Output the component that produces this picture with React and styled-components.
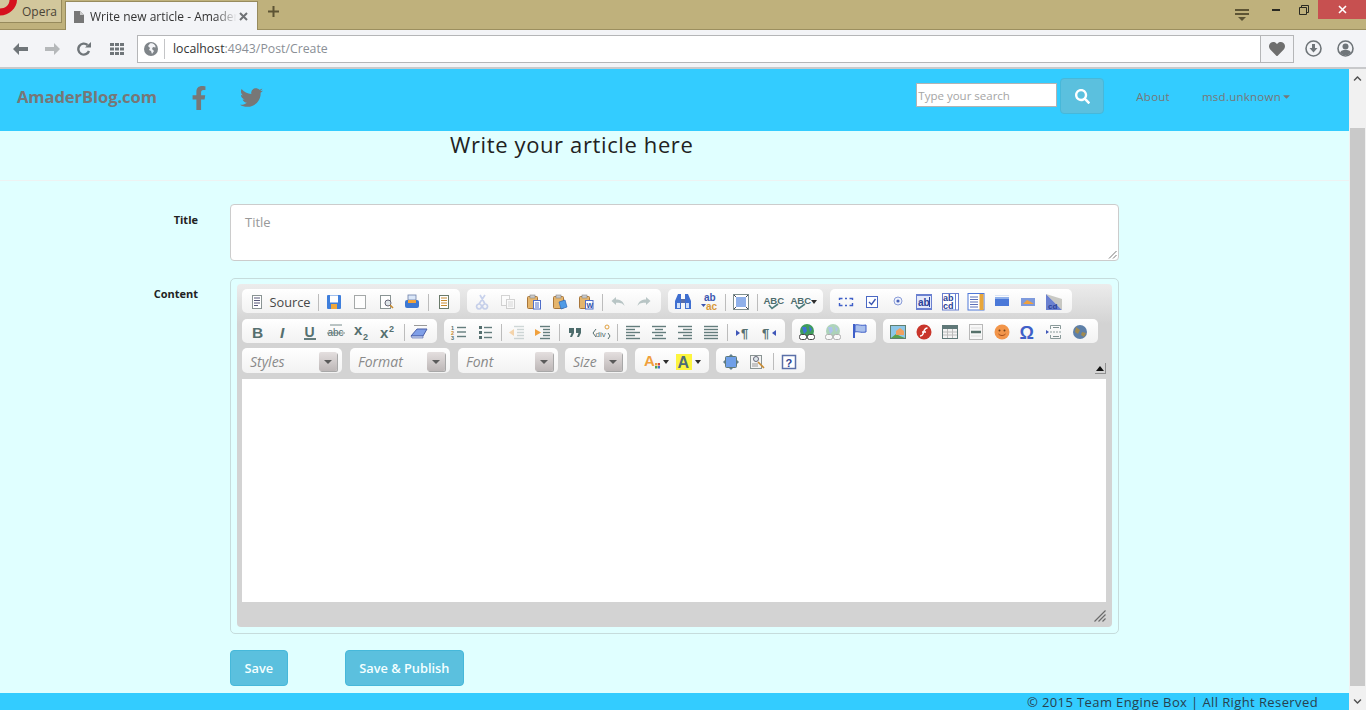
import React from 'react';
import styled, { createGlobalStyle } from 'styled-components';
import { FaFacebookF, FaTwitter, FaSearch, FaHeart, FaCaretDown, FaChevronUp, FaChevronDown } from 'react-icons/fa';

const GlobalStyle = createGlobalStyle`
  html, body { margin: 0; padding: 0; height: 100%; overflow: hidden; }
  body { font-family: "Open Sans", "Noto Sans", sans-serif; background: #e0ffff; color: #333; }
  * { box-sizing: border-box; }
`;

/* ---------- browser chrome ---------- */
const Shell = styled.div`
  display: flex;
  flex-direction: column;
  width: 1366px;
  height: 710px;
  overflow: hidden;
`;

const TabStrip = styled.div`
  display: flex;
  align-items: flex-start;
  height: 30px;
  flex: none;
  background: #bfb17c;
  border-bottom: 1px solid #9c8f5f;
`;

const OperaButton = styled.div`
  position: relative;
  display: flex;
  align-items: center;
  width: 62px;
  height: 23px;
  padding-left: 22px;
  background: #d2c79c;
  border: 1px solid #968a5c;
  border-top: none;
  border-left: none;
  font-size: 12px;
  color: #4a4436;
  overflow: hidden;
`;

const OperaLogo = styled.svg`
  position: absolute;
  left: 0;
  top: 0;
`;

const Tab = styled.div`
  display: flex;
  align-items: center;
  width: 193px;
  height: 30px;
  margin: 1px 0 0 3px;
  padding: 0 9px 0 8px;
  background: #f3f4f7;
  border: 1px solid #978b5d;
  border-bottom: none;
  font-size: 12px;
  color: #333;
`;

const TabTitle = styled.span`
  width: 147px;
  margin: 0 2px 0 6px;
  white-space: nowrap;
  overflow: hidden;
  mask-image: linear-gradient(to right, #000 85%, transparent 100%);
`;

const NewTab = styled.div`
  margin: 6px 0 0 10px;
  line-height: 0;
`;

const WindowControls = styled.div`
  display: flex;
  align-items: flex-start;
  margin-left: auto;
`;

const TabMenu = styled.div`
  margin: 9px 13px 0 0;
  line-height: 0;
`;

const WinButton = styled.div`
  display: flex;
  align-items: center;
  justify-content: center;
  width: ${(p) => p.$w || 28}px;
  height: 19px;
  background: ${(p) => p.$bg || 'transparent'};
  line-height: 0;
`;

const Toolbar = styled.div`
  display: flex;
  align-items: center;
  height: 39px;
  flex: none;
  padding: 0 0 0 13px;
  background: #f3f4f7;
  border-bottom: 2px solid #c8c9cb;
`;

const NavGlyph = styled.div`
  width: ${(p) => p.$w || 32}px;
  line-height: 0;
`;

const AddressBar = styled.div`
  display: flex;
  align-items: center;
  width: 1157px;
  height: 28px;
  background: #fff;
  border: 1px solid #b5b6b8;
`;

const SiteIcon = styled.div`
  display: flex;
  align-items: center;
  height: 20px;
  padding: 0 6px;
  border-right: 1px solid #c4c5c7;
  line-height: 0;
`;

const Url = styled.div`
  margin-left: 8px;
  font-size: 12.3px;
  color: #333;
  span { color: #8a8f96; }
`;

const HeartBox = styled.div`
  display: flex;
  align-items: center;
  justify-content: center;
  width: 33px;
  height: 100%;
  margin-left: auto;
  background: #f3f4f7;
  border-left: 1px solid #b5b6b8;
  color: #6e6e6e;
`;

const RoundTools = styled.div`
  display: flex;
  gap: 15px;
  margin-left: 11px;
  line-height: 0;
`;

/* ---------- page ---------- */
const Viewport = styled.div`
  display: flex;
  flex: 1;
  min-height: 0;
`;

const Page = styled.div`
  display: flex;
  flex-direction: column;
  width: 1349px;
  background: #e0ffff;
`;

const Scrollbar = styled.div`
  display: flex;
  flex-direction: column;
  align-items: center;
  width: 17px;
  background: #f1f1f1;
  color: #505050;
`;

const ScrollArrow = styled.div`
  display: flex;
  align-items: center;
  justify-content: center;
  width: 100%;
  height: ${(p) => p.$h}px;
  margin-top: ${(p) => p.$mt || 0}px;
  font-size: 9px;
`;

const ScrollThumb = styled.div`
  width: 15px;
  height: 558px;
  margin-top: 41px;
  background: #c9c9c9;
`;

const NavBar = styled.header`
  display: flex;
  align-items: center;
  height: 62px;
  flex: none;
  padding: 0 0 8px 17px;
  background: #33ccff;
`;

const Brand = styled.div`
  width: 170px;
  font-size: 16.6px;
  font-weight: 700;
  color: #777;
  letter-spacing: -0.1px;
`;

const SocialLink = styled.div`
  display: flex;
  width: ${(p) => p.$w}px;
  padding-top: 3px;
  font-size: ${(p) => p.$size}px;
  color: #777;
`;

const SearchForm = styled.div`
  display: flex;
  align-items: center;
  margin-left: auto;
`;

const SearchInput = styled.div`
  display: flex;
  align-items: center;
  width: 141px;
  height: 24px;
  margin-bottom: 2px;
  padding-left: 1px;
  background: #fff;
  border: 1px solid #b3b3b3;
  font-size: 11.5px;
  color: #a5a5a5;
`;

const SearchButton = styled.div`
  display: flex;
  align-items: center;
  justify-content: center;
  width: 44px;
  height: 36px;
  margin-left: 3px;
  background: #5bc0de;
  border: 1px solid #46b8da;
  border-radius: 4px;
  color: #fff;
  font-size: 15px;
`;

const NavLink = styled.div`
  display: flex;
  align-items: center;
  margin-left: ${(p) => p.$ml}px;
  margin-right: ${(p) => p.$mr || 0}px;
  font-size: 11.5px;
  color: #777;
  letter-spacing: 0.25px;
`;

const Heading = styled.h2`
  height: 50px;
  flex: none;
  margin: 0;
  padding-left: 450px;
  border-bottom: 1px solid #eef2f2;
  font-size: 22px;
  font-weight: 400;
  letter-spacing: 0.62px;
  line-height: 27px;
  color: #222;
`;

const FormRow = styled.div`
  display: grid;
  grid-template-columns: 198px 889px;
  column-gap: 32px;
  margin-top: ${(p) => p.$mt}px;
`;

const Label = styled.label`
  padding-top: ${(p) => p.$pt}px;
  font-size: 11px;
  font-weight: 700;
  line-height: 16px;
  text-align: right;
  color: #222;
`;

const TitleInput = styled.div`
  position: relative;
  height: 57px;
  padding: 8px 14px;
  background: #fff;
  border: 1px solid #ccc;
  border-radius: 4px;
  font-size: 13px;
  line-height: 18px;
  color: #999;
`;

const Grip = styled.svg`
  position: absolute;
  right: 1px;
  bottom: 1px;
`;

const EditorFrame = styled.div`
  height: 356px;
  padding: 5px 6px;
  border: 1px solid #c6dcdc;
  border-radius: 5px;
`;

const Editor = styled.div`
  position: relative;
  display: flex;
  flex-direction: column;
  width: 875px;
  height: 343px;
  border-radius: 4px;
  background: linear-gradient(to bottom, #ececec 0, #d3d3d3 40px, #d3d3d3 100%);
`;

const ToolArea = styled.div`
  position: relative;
  display: flex;
  flex-direction: column;
  height: 95px;
  padding: 5px 0 0 5px;
`;

const ToolRow = styled.div`
  display: flex;
  gap: ${(p) => p.$gap ?? 7}px;
  height: ${(p) => p.$h}px;
  margin-bottom: ${(p) => p.$mb}px;
`;

const Group = styled.div`
  display: flex;
  align-items: center;
  width: ${(p) => p.$w}px;
  padding: 2px 0 0 ${(p) => p.$pl ?? 3}px;
  margin-right: ${(p) => p.$mr || 0}px;
  background: linear-gradient(to bottom, #fff, #f2f2f2);
  border-radius: 5px;
`;

const ToolButton = styled.div`
  display: flex;
  align-items: center;
  justify-content: center;
  flex: none;
  width: ${(p) => p.$w || 26}px;
  height: 100%;
  line-height: 0;
  opacity: ${(p) => (p.$off ? 0.4 : 1)};
`;

const SourceLabel = styled.span`
  margin-left: 4px;
  font-size: 12.8px;
  line-height: 16px;
  color: #474747;
`;

const Separator = styled.div`
  flex: none;
  width: 1px;
  height: 17px;
  margin: 0 2px 0 3px;
  background: #bcbcbc;
`;

const Caret = styled.span`
  width: 0;
  height: 0;
  margin-left: 3px;
  border: 3px solid transparent;
  border-top: 4px solid #2d2d2d;
  border-bottom: none;
`;

const Combo = styled.div`
  display: flex;
  align-items: center;
  justify-content: space-between;
  width: ${(p) => p.$w}px;
  margin-right: ${(p) => p.$mr}px;
  padding: 2px 5px 0 8px;
  background: linear-gradient(to bottom, #fff, #f2f2f2);
  border-radius: 5px;
  font-size: 14px;
  font-style: italic;
  color: #8a8a8a;
`;

const ComboArrow = styled.div`
  display: flex;
  align-items: center;
  justify-content: center;
  width: 18px;
  height: 19px;
  background: linear-gradient(to bottom, #e4dfdf, #bdb7b7);
  border-radius: 2px;
  box-shadow: 1px 1px 0 #a8a8a8;

  &::after {
    content: '';
    border: 4px solid transparent;
    border-top: 4px solid #5a5a5a;
    border-bottom: none;
  }
`;

const Collapser = styled.div`
  position: absolute;
  right: 6px;
  bottom: 5px;
  display: flex;
  align-items: center;
  justify-content: center;
  width: 11px;
  height: 11px;
  border-right: 1px solid #8f8f8f;
  border-bottom: 1px solid #8f8f8f;

  &::after {
    content: '';
    border: 4px solid transparent;
    border-bottom: 5px solid #111;
    border-top: none;
  }
`;

const EditArea = styled.div`
  width: 864px;
  height: 223px;
  margin-left: 5px;
  background: #fff;
`;

const Resize = styled.svg`
  position: absolute;
  right: 6px;
  bottom: 5px;
`;

const Actions = styled.div`
  display: flex;
  gap: 57px;
  margin: 16px 0 0 230px;
`;

const ActionButton = styled.button`
  height: 36px;
  padding: 0 13.5px;
  background: #5bc0de;
  border: 1px solid #46b8da;
  border-radius: 4px;
  font-family: inherit;
  font-size: 12.8px;
  font-weight: 600;
  color: #f4ffff;
`;

const Footer = styled.footer`
  display: flex;
  justify-content: flex-end;
  align-items: center;
  height: 17px;
  flex: none;
  margin-top: auto;
  padding: 0 31px 0 0;
  background: #33ccff;
  font-size: 13px;
  letter-spacing: 0.4px;
  color: #27414f;
`;

/* ---------- CKEditor icons, 16x16 ---------- */
const lines = (ys, x1, x2, color = '#647d7d', w = 1.4) =>
  ys.map((y, i) => <path key={i} d={`M${Array.isArray(x1) ? x1[i] : x1} ${y}H${Array.isArray(x2) ? x2[i] : x2}`} stroke={color} strokeWidth={w} />);

const Doc = ({ x = 3, y = 1, w = 10, h = 14, fill = '#fff', stroke = '#8a9494' }) => (
  <rect x={x + 0.5} y={y + 0.5} width={w - 1} height={h - 1} fill={fill} stroke={stroke} />
);

const Clip = () => (
  <>
    <rect x="1.5" y="2.5" width="10" height="12" rx="1" fill="#e5b56c" stroke="#a8763a" />
    <rect x="4" y="1" width="5" height="3" fill="#c9c9c9" stroke="#888" strokeWidth=".6" />
  </>
);

const T = ({ x, y, size, fill = '#556f6f', weight = 700, style, children }) => (
  <text x={x} y={y} fontSize={size} fontWeight={weight} fontStyle={style} fill={fill} fontFamily="Liberation Sans, sans-serif">
    {children}
  </text>
);

const icons = {
  source: <><Doc /><path d="M5 4h6M5 6.500h6M5 9h6M5 11.500h4" stroke="#557" strokeWidth="1" /></>,
  save: <><rect x="1" y="1" width="14" height="14" rx="1" fill="#3f7fdc" /><rect x="4" y="1.500" width="8" height="7" fill="#fff" /><rect x="5" y="10" width="6" height="5" fill="#f0a83c" /></>,
  newpage: <Doc x={2} w={12} fill="#fdfdfd" stroke="#a4a8a8" />,
  preview: <><Doc x={2} w={11} /><circle cx="10" cy="9" r="3" fill="#dfe6ea" stroke="#667" /><path d="M12 11l3 3" stroke="#c98b30" strokeWidth="1.600" /></>,
  print: <><rect x="4" y="1" width="8" height="5" fill="#dbe7f8" stroke="#6c7fa8" strokeWidth=".8" /><rect x="1" y="6" width="14" height="8" rx="2" fill="#3e78d2" /><rect x="4" y="6" width="8" height="3" fill="#f2a33a" /></>,
  templates: <><Doc stroke="#6a7a6a" /><path d="M5 4h6M5 6.500h6M5 9h6M5 11.500h6" stroke="#c78b30" strokeWidth="1" /></>,
  cut: <path d="M11 1L5 10M6 1l5 9M5 10a2.500 2.500 0 1 0 .1 0M11 10a2.500 2.500 0 1 0 .1 0" fill="none" stroke="#7f97d8" strokeWidth="1.700" />,
  copy: <><Doc x={1} y={1} w={9} h={11} stroke="#999" /><Doc x={6} y={5} w={9} h={10} stroke="#999" /><path d="M8 8h5M8 10h5M8 12h5" stroke="#aaa" /></>,
  paste: <><Clip /><rect x="7.500" y="6.500" width="7" height="8.500" fill="#fff" stroke="#4f6dc8" /><path d="M9 9h4M9 11h4M9 13h4" stroke="#4f6dc8" /></>,
  pastetext: <><Clip /><path d="M7 8l6-2 2 7-6 2z" fill="#4f9be6" stroke="#2c66b8" strokeWidth=".7" /></>,
  pasteword: <><Clip /><rect x="7.500" y="6.500" width="7.500" height="8.500" fill="#fff" stroke="#4f6dc8" /><T x={8.500} y={13.500} size={7} fill="#2c4fa8">W</T></>,
  undo: <path d="M1.500 7L6 3v2.500c4 0 7.500 1.500 8.500 6.500-2-3-4.500-3.200-8.500-3.200V11z" fill="#5a7a7a" />,
  redo: <path d="M14.500 7L10 3v2.500C6 5.500 2.500 7 1.500 12c2-3 4.500-3.200 8.500-3.200V11z" fill="#5a7a7a" />,
  find: <><path d="M3 0h3v15H0V7zM10 0h3l3 7v8h-6z" fill="#3f6fd0" /><rect x="6" y="5" width="4" height="4" fill="#5a6fa8" /><rect x="2" y="9" width="3" height="5" fill="#cfe0fa" /><rect x="11" y="9" width="3" height="5" fill="#cfe0fa" /></>,
  replace: <><T x={3} y={7} size={10} fill="#3a56b0">ab</T><T x={5} y={15.500} size={10} fill="#d99a3a">ac</T><path d="M0 10l2.500 3 2.500-3z" fill="#3a56b0" /></>,
  selectall: <><rect x="0.500" y="0.500" width="15" height="15" fill="#fff" stroke="#7f8f8f" /><rect x="3" y="3" width="10" height="10" fill="#8fb0ea" /><path d="M1 1l2 2M15 1l-2 2M1 15l2-2M15 15l-2-2" stroke="#445" /></>,
  spell: <><T x={-1.500} y={9.500} size={9.500} fill="#4d6c6c">ABC</T><path d="M4 11l3 3.500L13 10" fill="none" stroke="#4d7c7c" strokeWidth="1.600" /></>,
  form: <path d="M1.500 6V4.500h3M7 4.500h2M11.500 4.500h3V6M1.500 9v2.500h3M7 11.500h2M11.500 11.500h3V9" fill="none" stroke="#3f5fc8" strokeWidth="1.400" />,
  checkbox: <><rect x="2.500" y="2.500" width="11" height="11" fill="#fff" stroke="#4a68c4" /><path d="M5 8l2.500 2.500L11.500 5" fill="none" stroke="#3a56b0" strokeWidth="1.400" /></>,
  radio: <><circle cx="8" cy="7" r="4" fill="#eef2fb" stroke="#8a9cd8" /><circle cx="8" cy="7" r="1.600" fill="#4a62b8" /></>,
  textfield: <><rect x="0" y="0" width="16" height="16" fill="#6a80d0" /><rect x="1" y="2" width="14" height="12" fill="#e4e9fa" /><T x={2} y={12} size={10} fill="#2c4298">ab</T><path d="M13.500 3v10" stroke="#2c4298" /></>,
  textarea: <><rect x="0.500" y="-.5" width="16" height="16.500" fill="#fff" stroke="#6a80d0" /><T x={1} y={7} size={9} fill="#2c4298">ab</T><T x={1} y={15} size={9} fill="#2c4298">cd</T><path d="M13.500 0v16" stroke="#6a80d0" /></>,
  select: <><rect x="0" y="-.5" width="16" height="16.500" fill="#fff" stroke="#4f78d8" /><path d="M2 3h8M2 5.500h8M2 8h8M2 10.500h8M2 13h8" stroke="#5b70b8" /><rect x="11.500" y="0" width="4" height="16" fill="#e8a63a" /></>,
  button: <><rect x="1" y="3" width="14" height="9" fill="#4a78d8" /><rect x="1" y="1" width="14" height="1" fill="#d9e4f6" /><rect x="1" y="3" width="14" height="2" fill="#8fb0ea" /></>,
  imagebutton: <><rect x="1" y="4" width="14" height="8" fill="#7e9adc" /><path d="M3 10l4-4 4 2 3 2z" fill="#f0a03c" /></>,
  hidden: <><path d="M0 0l16 16H0z" fill="#6a80d0" /><path d="M0 0l16 16V5z" fill="#a9a9a0" opacity=".6" /><T x={2} y={15} size={8} fill="#2c4298">cd</T></>,
  bold: <T x={2} y={13.500} size={15.500} weight={900}>B</T>,
  italic: <T x={4} y={13.500} size={15.500} style="italic">I</T>,
  underline: <><T x={2.500} y={12.500} size={14} weight={900}>U</T><path d="M2 15h12" stroke="#556f6f" strokeWidth="1.800" /></>,
  strike: <><T x={-.5} y={12} size={10} weight={400}>abc</T><path d="M-1 9h18M2 1h12" stroke="#556f6f" strokeWidth=".8" /></>,
  sub: <><T x={0} y={11} size={15} weight={900}>x</T><T x={9} y={16} size={9} weight={900}>2</T></>,
  sup: <><T x={0} y={14} size={15} weight={900}>x</T><T x={9} y={8} size={9} weight={900}>2</T></>,
  remove: <><path d="M-1 12l6-7h10l-4 7z" fill="#7f9fe8" stroke="#4a5fa8" /><path d="M-1 12h12v2H0z" fill="#c9d6f2" stroke="#4a5fa8" strokeWidth=".6" /><path d="M2 1.500h13" stroke="#999" /></>,
  numbered: <><T x={0} y={6} size={5.500} fill="#556f6f">1</T><T x={0} y={11} size={5.500} fill="#c78b30">2</T><T x={0} y={16} size={5.500} fill="#556f6f">3</T>{lines([3.500, 8, 12.500], 6, 15)}</>,
  bulleted: <><path d="M2 2h3v3H2zM2 7h3v3H2zM2 12h3v3H2z" fill="#556f6f" />{lines([3.500, 8.500, 13.500], 7, 15)}</>,
  outdent: <>{lines([2.500, 5.500, 8.500, 11.500, 14.500], [5, 8, 8, 8, 5], 15, '#8ea2a2')}<path d="M0 8.500L5 5v7z" fill="#f0a03c" /></>,
  indent: <>{lines([2.500, 5.500, 8.500, 11.500, 14.500], [5, 8, 8, 8, 5], 15)}<path d="M6 8.500L0 5v7z" fill="#f0a03c" /></>,
  quote: <path d="M2 4h5v5l-2 4H3l1.500-4H2zM9 4h5v5l-2 4h-2l1.500-4H9z" fill="#4d6c6c" />,
  div: <><T x={2.500} y={13} size={8} weight={400}>div</T><path d="M3 5L0 9l3 4M15 9l2 3-2 3" fill="none" stroke="#556f6f" /><circle cx="14" cy="3" r="2" fill="none" stroke="#e0a040" /></>,
  left: lines([2.500, 5.500, 8.500, 11.500, 14.500], 1, [15, 10, 15, 10, 15]),
  center: lines([2.500, 5.500, 8.500, 11.500, 14.500], [1, 4, 1, 4, 1], [15, 12, 15, 12, 15]),
  right: lines([2.500, 5.500, 8.500, 11.500, 14.500], [1, 6, 1, 6, 1], 15),
  justify: lines([2.500, 5.500, 8.500, 11.500, 14.500], 1, 15),
  ltr: <><path d="M1 6l4 3-4 3z" fill="#3f56b8" /><T x={6} y={13.500} size={13} fill="#556f6f">¶</T></>,
  rtl: <><path d="M15 6l-4 3 4 3z" fill="#3f56b8" /><T x={1} y={13.500} size={13} fill="#556f6f">¶</T></>,
  link: <><circle cx="8" cy="7" r="7" fill="#3f9c5c" /><path d="M3 3h4l1 4-3 3zM10 2l3 3-2 3z" fill="#3f72d8" /><rect x="0.500" y="10.500" width="7" height="5" rx="2" fill="#fff" stroke="#444" /><rect x="8.500" y="10.500" width="7" height="5" rx="2" fill="#fff" stroke="#444" /></>,
  anchor: <><path d="M3 0v14" stroke="#3f5fc8" strokeWidth="2" /><path d="M4 1c3-1 5 1 11 0v7c-6 1-8-1-11 0z" fill="#a9c0ec" stroke="#3f5fc8" /></>,
  image: <><rect x="0.500" y="1.500" width="15" height="13" fill="#8dc7e8" stroke="#5f7f6f" /><path d="M1 14l5-4 4 2 5 2z" fill="#5aa04c" /><path d="M6 7l4-3 4 3v4H6z" fill="#f0a060" /></>,
  flash: <><circle cx="8" cy="8" r="7.500" fill="#c9352b" /><path d="M11.500 4C8 4 8 7 7 10c-.5 1.500-2 2-3 2M6 8h4" fill="none" stroke="#fff" strokeWidth="1.400" /></>,
  table: <><rect x="0.500" y="1.500" width="15" height="13" fill="#f3f3f3" stroke="#5f7878" /><rect x="1" y="2" width="14" height="3" fill="#5f7878" /><path d="M1 8h14M1 11h14M5.500 5v9M10.500 5v9" stroke="#bcbcbc" /></>,
  hr: <><rect x="1.500" y="0.500" width="13" height="15" fill="#f7f7f7" stroke="#b8b8b8" /><path d="M3 8h10" stroke="#55706a" strokeWidth="2.500" /><path d="M3 4h10M3 12h10" stroke="#ddd" /></>,
  smiley: <><circle cx="8" cy="8" r="7.500" fill="#f2954a" /><circle cx="5.500" cy="6.500" r="1" fill="#704018" /><circle cx="10.500" cy="6.500" r="1" fill="#704018" /><path d="M4.500 10c2 2 5 2 7 0" fill="none" stroke="#a04a18" /></>,
  char: <T x={-.5} y={14.500} size={18} fill="#3f5fc8" weight={900}>Ω</T>,
  pagebreak: <><path d="M4.500 5V1.500h10V5M4.500 11v3.500h10V11" fill="none" stroke="#8a9a9a" /><path d="M7 3.500h6M7 12.500h6" stroke="#7f8f8f" /><path d="M0 6l3 2-3 2z" fill="#3f56b8" /><path d="M4 8h11" stroke="#8a9a9a" strokeDasharray="2 1" /></>,
  iframe: <><circle cx="8" cy="8" r="7" fill="#5d7fa8" /><path d="M4 3l4 3-2 4-3-2zM10 8l4 1-2 4-3-2z" fill="#a08a50" /></>,
  textcolor: <><T x={0} y={12} size={15} fill="#f0a03c" weight={900}>A</T><rect x="11" y="9" width="2.500" height="2.500" fill="#e8a03c" /><rect x="14" y="9" width="2" height="2.500" fill="#d94a3a" /><rect x="11" y="12" width="2.500" height="2.500" fill="#4fa04f" /><rect x="14" y="12" width="2" height="2.500" fill="#3f6fd0" /></>,
  bgcolor: <><rect x="0" y="0" width="16" height="16" fill="#fdf53f" /><T x={1.500} y={14} size={16} fill="#4d6c78" weight={900}>A</T></>,
  maximize: <><path d="M8 0l2 2H6zM8 16l2-2H6zM0 8l2-2v4zM16 8l-2-2v4z" fill="#5f7f8f" /><rect x="2.500" y="2.500" width="11" height="11" rx="1" fill="#6f9fe8" stroke="#5f7878" /></>,
  blocks: <><rect x="1.500" y="1.500" width="11" height="13" fill="#f2f2f2" stroke="#8a9494" /><circle cx="7" cy="5" r="2.500" fill="#dde6ea" stroke="#667" /><path d="M9 8l6 6" stroke="#c98b30" strokeWidth="1.600" /><path d="M3 10h6M3 12h6" stroke="#999" /></>,
  about: <><rect x="1.500" y="1.500" width="13" height="13" fill="#fff" stroke="#5a6fa8" strokeWidth="1.500" /><T x={4.500} y={12.500} size={11} fill="#2c3f90" weight={900}>?</T></>,
};

const Icon = ({ name }) => (
  <svg width="16" height="16" viewBox="0 0 16 16" style={{ overflow: 'visible' }}>
    {icons[name]}
  </svg>
);

const Tool = ({ name, off }) => (
  <ToolButton $off={off}>
    <Icon name={name} />
  </ToolButton>
);

const tools = (names, off) =>
  names.map((n, i) => (n === '|' ? <Separator key={i} /> : <Tool key={n} name={n} off={off} />));

export default function App() {
  return (
    <Shell>
      <GlobalStyle />
      <TabStrip>
        <OperaButton>
          <OperaLogo width="18" height="16" viewBox="0 0 18 16">
            <path d="M0 15.500C9 15.500 17 8 17 0H9.500C9.500 5 5 8.500 0 8.500Z" fill="#d6101e" />
          </OperaLogo>
          Opera
        </OperaButton>
        <Tab>
          <svg width="10" height="12" viewBox="0 0 10 12">
            <path d="M0 0h6l4 4v8H0z" fill="#777" />
            <path d="M6 0v4h4z" fill="#ccc" />
          </svg>
          <TabTitle>Write new article - AmaderBlog.com</TabTitle>
          <svg width="9" height="9" viewBox="0 0 9 9">
            <path d="M1 1l7 7M8 1L1 8" stroke="#6f7275" strokeWidth="2" />
          </svg>
        </Tab>
        <NewTab>
          <svg width="11" height="11" viewBox="0 0 11 11">
            <path d="M5.500 0v11M0 5.500h11" stroke="#5d5434" strokeWidth="2" />
          </svg>
        </NewTab>
        <WindowControls>
          <TabMenu>
            <svg width="14" height="13" viewBox="0 0 14 13">
              <path d="M0 1h14M0 5h14" stroke="#5d5434" strokeWidth="2" />
              <path d="M3 8h8l-4 4z" fill="#5d5434" />
            </svg>
          </TabMenu>
          <WinButton>
            <svg width="8" height="2" viewBox="0 0 8 2"><path d="M0 0h8v2H0z" fill="#2a2a22" /></svg>
          </WinButton>
          <WinButton>
            <svg width="10" height="10" viewBox="0 0 10 10">
              <path d="M.5 2.500h7v7h-7zM2.500 2.500v-2h7v7h-2" fill="none" stroke="#2a2a22" />
            </svg>
          </WinButton>
          <WinButton $w={48} $bg="#c75050">
            <svg width="9" height="9" viewBox="0 0 9 9">
              <path d="M1 1l7 7M8 1L1 8" stroke="#fff" strokeWidth="1.600" />
            </svg>
          </WinButton>
        </WindowControls>
      </TabStrip>

      <Toolbar>
        <NavGlyph>
          <svg width="15" height="12" viewBox="0 0 15 12"><path d="M0 6l6-6v4h9v4H6v4z" fill="#6f7579" /></svg>
        </NavGlyph>
        <NavGlyph>
          <svg width="15" height="12" viewBox="0 0 15 12"><path d="M15 6L9 0v4H0v4h9v4z" fill="#b5b8ba" /></svg>
        </NavGlyph>
        <NavGlyph $w={33}>
          <svg width="14" height="14" viewBox="0 0 14 14">
            <path d="M12 9A5.500 5.500 0 1 1 10.500 3" fill="none" stroke="#6f7579" strokeWidth="2.400" />
            <path d="M8 5.500h6V0z" fill="#6f7579" />
          </svg>
        </NavGlyph>
        <NavGlyph $w={27}>
          <svg width="14" height="12" viewBox="0 0 14 12">
            <path d="M0 0h4v3H0zM5 0h4v3H5zM10 0h4v3h-4zM0 4.500h4v3H0zM5 4.500h4v3H5zM10 4.500h4v3h-4zM0 9h4v3H0zM5 9h4v3H5zM10 9h4v3h-4z" fill="#6f7579" />
          </svg>
        </NavGlyph>
        <AddressBar>
          <SiteIcon>
            <svg width="14" height="14" viewBox="0 0 14 14">
              <circle cx="7" cy="7" r="7" fill="#7f8589" />
              <path d="M6 1.500c3-1 6 2 5.500 4L9 5 8 7l2 2-2 3-1-3-2-1 1-2-2-2z" fill="#f3f4f7" />
            </svg>
          </SiteIcon>
          <Url>localhost<span>:4943/Post/Create</span></Url>
          <HeartBox><FaHeart size={16} /></HeartBox>
        </AddressBar>
        <RoundTools>
          <svg width="17" height="17" viewBox="0 0 17 17">
            <circle cx="8.500" cy="8.500" r="7.500" fill="none" stroke="#6f7579" strokeWidth="1.600" />
            <path d="M7 4h3v4h2.500l-4 4.500-4-4.500H7z" fill="#6f7579" />
          </svg>
          <svg width="17" height="17" viewBox="0 0 17 17">
            <circle cx="8.500" cy="8.500" r="7.500" fill="none" stroke="#6f7579" strokeWidth="1.600" />
            <circle cx="8.500" cy="6.500" r="3" fill="#6f7579" />
            <path d="M3 13c1-3 3-3 5.500-3s4.500 0 5.500 3l-3 2H6z" fill="#6f7579" />
          </svg>
        </RoundTools>
      </Toolbar>

      <Viewport>
        <Page>
          <NavBar>
            <Brand>AmaderBlog.com</Brand>
            <SocialLink $w={53} $size={24}><FaFacebookF /></SocialLink>
            <SocialLink $w={30} $size={23}><FaTwitter /></SocialLink>
            <SearchForm>
              <SearchInput>Type your search</SearchInput>
              <SearchButton><FaSearch /></SearchButton>
            </SearchForm>
            <NavLink $ml={32}>About</NavLink>
            <NavLink $ml={32} $mr={57}>
              msd.unknown
              <FaCaretDown size={11} />
            </NavLink>
          </NavBar>

          <Heading>Write your article here</Heading>

          <FormRow $mt={23}>
            <Label $pt={8}>Title</Label>
            <TitleInput>
              Title
              <Grip width="9" height="9" viewBox="0 0 9 9">
                <path d="M8.500 1L1 8.500M8.500 5L5 8.500" stroke="#777" />
              </Grip>
            </TitleInput>
          </FormRow>

          <FormRow $mt={17}>
            <Label $pt={8}>Content</Label>
            <EditorFrame>
              <Editor>
                <ToolArea>
                  <ToolRow $h={24} $mb={6}>
                    <Group $w={218}>
                      <ToolButton $w={70}>
                        <Icon name="source" />
                        <SourceLabel>Source</SourceLabel>
                      </ToolButton>
                      <Separator />
                      {tools(['save', 'newpage', 'preview', 'print', '|', 'templates'])}
                    </Group>
                    <Group $w={194} $pl={2}>
                      {tools(['cut', 'copy'], true)}
                      {tools(['paste', 'pastetext', 'pasteword'])}
                      <Separator />
                      {tools(['undo', 'redo'], true)}
                    </Group>
                    <Group $w={155} $pl={2}>
                      {tools(['find', 'replace', '|', 'selectall', '|', 'spell'])}
                      <ToolButton $w={36}>
                        <Icon name="spell" />
                        <Caret />
                      </ToolButton>
                    </Group>
                    <Group $w={242}>
                      {tools(['form', 'checkbox', 'radio', 'textfield', 'textarea', 'select', 'button', 'imagebutton', 'hidden'])}
                    </Group>
                  </ToolRow>
                  <ToolRow $h={24} $mb={5}>
                    <Group $w={195} $pl={3}>
                      {tools(['bold', 'italic', 'underline', 'strike', 'sub', 'sup', '|', 'remove'])}
                    </Group>
                    <Group $w={341} $pl={2}>
                      {tools(['numbered', 'bulleted', '|'])}
                      {tools(['outdent'], true)}
                      {tools(['indent', '|', 'quote', 'div', '|', 'left', 'center', 'right', 'justify', '|', 'ltr', 'rtl'])}
                    </Group>
                    <Group $w={84} $pl={2}>
                      <Tool name="link" />
                      <Tool name="link" off />
                      <Tool name="anchor" />
                    </Group>
                    <Group $w={215} $pl={2}>
                      {tools(['image', 'flash', 'table', 'hr', 'smiley', 'char', 'pagebreak', 'iframe'])}
                    </Group>
                  </ToolRow>
                  <ToolRow $h={25} $mb={0} $gap={0}>
                    <Combo $w={100} $mr={8}>Styles<ComboArrow /></Combo>
                    <Combo $w={100} $mr={8}>Format<ComboArrow /></Combo>
                    <Combo $w={100} $mr={7}>Font<ComboArrow /></Combo>
                    <Combo $w={62} $mr={8}>Size<ComboArrow /></Combo>
                    <Group $w={74} $mr={7} $pl={5}>
                      <ToolButton $w={32}>
                        <Icon name="textcolor" />
                        <Caret />
                      </ToolButton>
                      <ToolButton $w={32}>
                        <Icon name="bgcolor" />
                        <Caret />
                      </ToolButton>
                    </Group>
                    <Group $w={89} $pl={2}>
                      {tools(['maximize', 'blocks', '|', 'about'])}
                    </Group>
                  </ToolRow>
                  <Collapser />
                </ToolArea>
                <EditArea />
                <Resize width="12" height="12" viewBox="0 0 12 12">
                  <path d="M11.500 .5L.5 11.500M11.500 4.500L4.500 11.500M11.500 8.500L8.500 11.500" stroke="#6b6b6b" strokeWidth="1.200" />
                </Resize>
              </Editor>
            </EditorFrame>
          </FormRow>

          <Actions>
            <ActionButton>Save</ActionButton>
            <ActionButton>Save &amp; Publish</ActionButton>
          </Actions>

          <Footer>© 2015 Team Engine Box | All Right Reserved</Footer>
        </Page>
        <Scrollbar>
          <ScrollArrow $h={18}><FaChevronUp /></ScrollArrow>
          <ScrollThumb />
          <ScrollArrow $h={17} $mt={7}><FaChevronDown /></ScrollArrow>
        </Scrollbar>
      </Viewport>
    </Shell>
  );
}
